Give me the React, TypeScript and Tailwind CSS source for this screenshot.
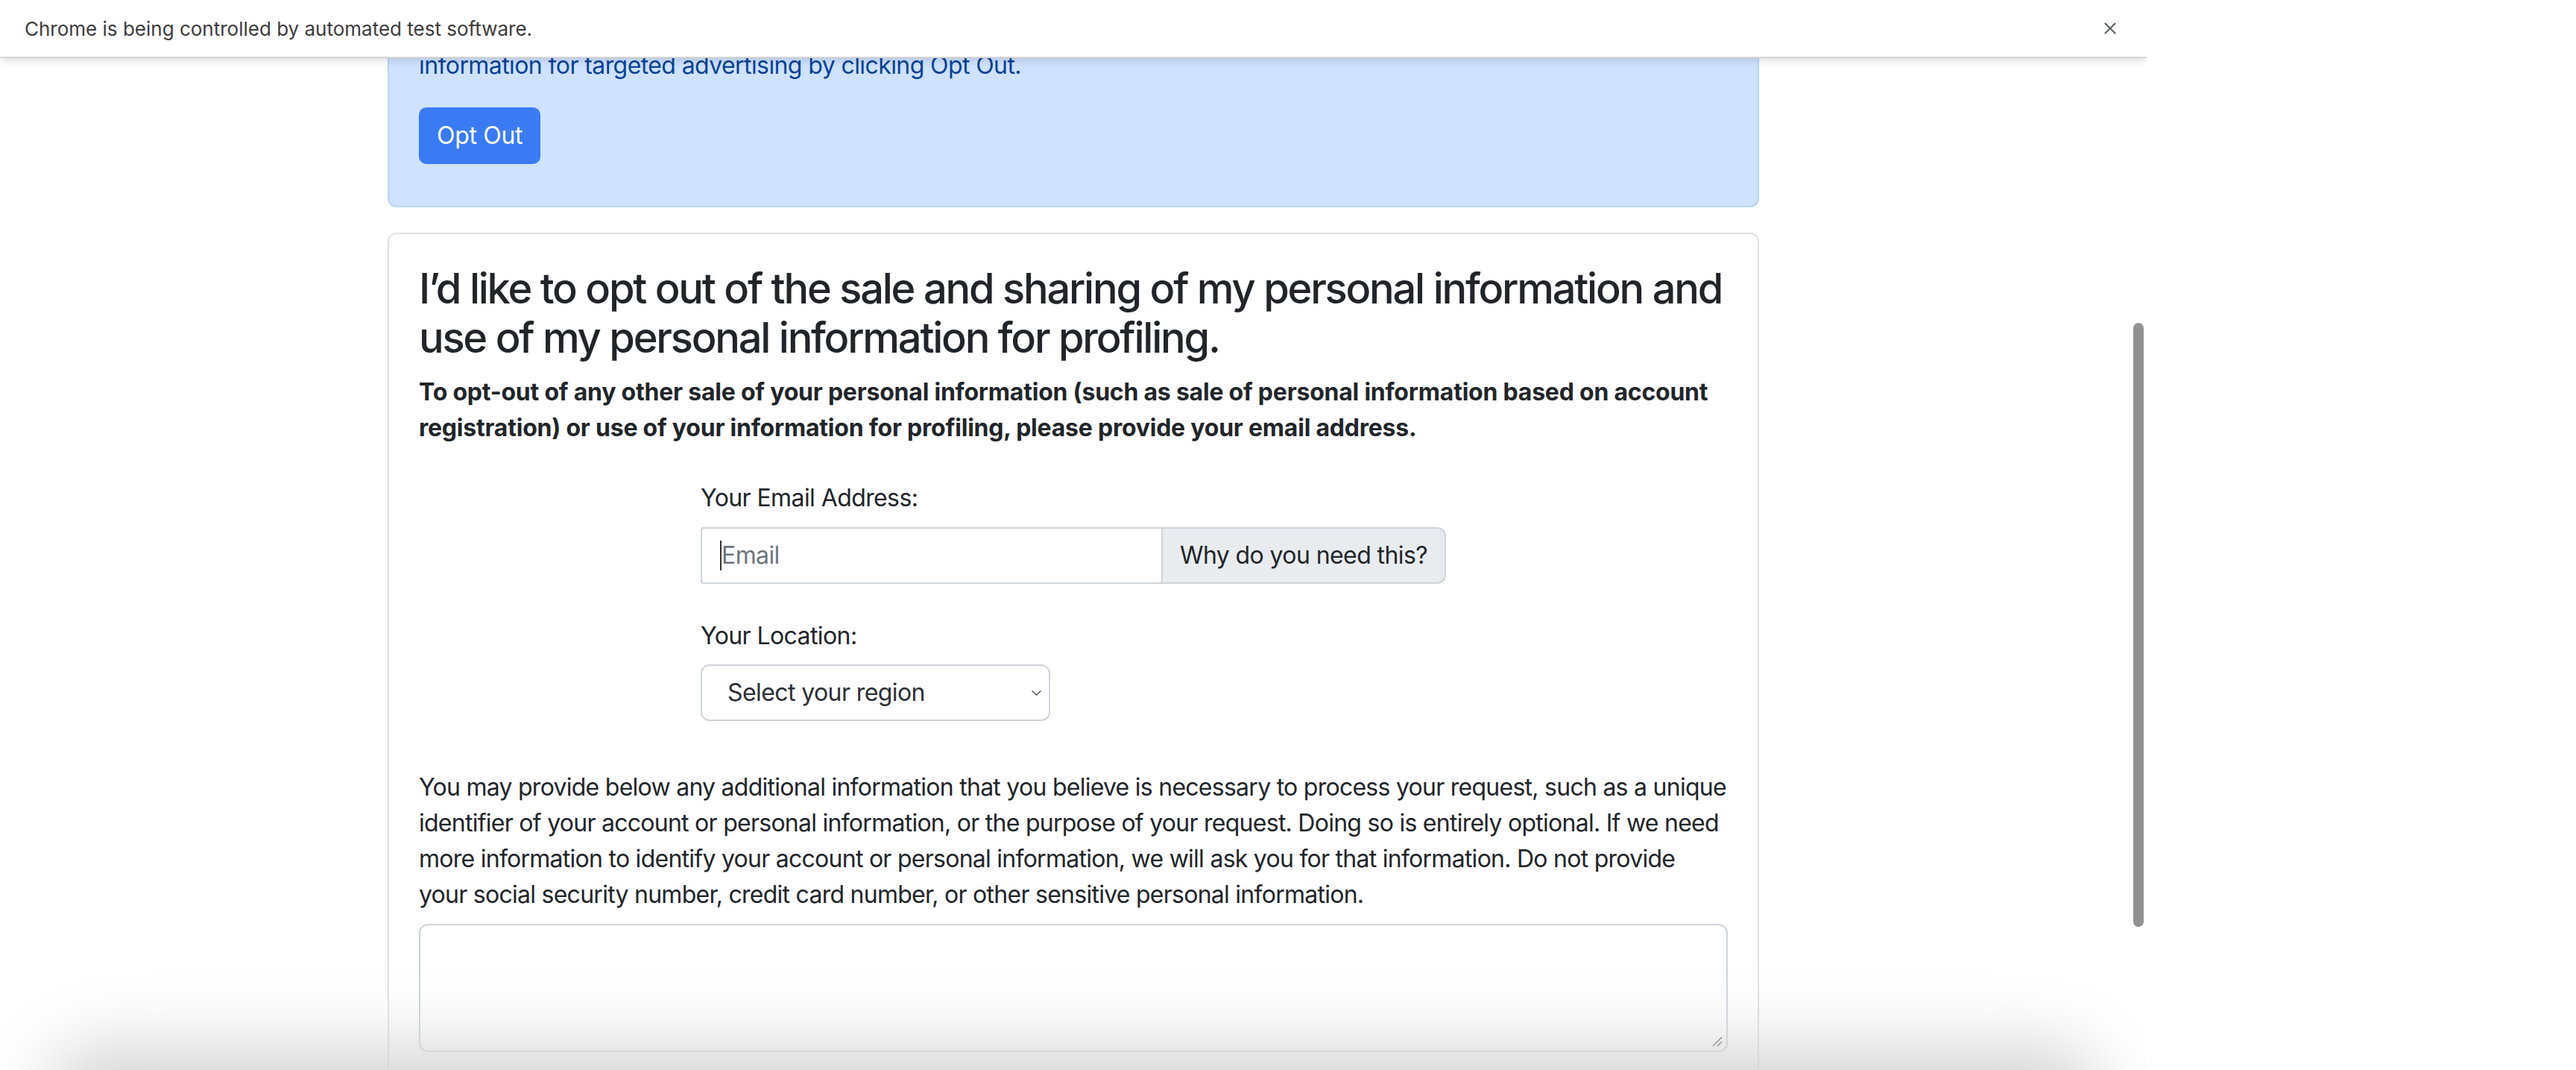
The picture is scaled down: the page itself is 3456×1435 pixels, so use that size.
import { X } from "lucide-react";

const font = { fontFamily: "Inter, 'Noto Sans', sans-serif" };

const ChromeBar = () => (
  <div className="absolute left-0 top-0 z-20 flex h-[78px] w-[2880px] items-center justify-between border-b-2 border-[#d6d6d6] bg-white pl-[33px] pr-[36px] shadow-[0_4px_10px_rgba(0,0,0,0.12)]">
    <span className="text-[26px] text-[#3c3c3c]">Chrome is being controlled by automated test software.</span>
    <X className="h-[26px] w-[26px] text-[#5f6368]" strokeWidth={2} />
  </div>
);

export default function App() {
  return (
    <div className="relative h-[1435px] w-[3456px] overflow-hidden bg-white text-[#212529]" style={font}>
      <div className="relative h-full w-[2880px] overflow-hidden">
        <ChromeBar />

        <main className="mx-auto w-[1840px] tracking-[-0.037em]">
          {/* alert, scrolled partly under the info bar */}
          <div className="rounded-b-[12px] border-2 border-t-0 border-[#b6d4fe] bg-[#cfe2ff] px-[40px] pb-[56px] pt-[64px] text-[32px] leading-[48px] text-[#084298]">
            <p>information for targeted advertising by clicking Opt Out.</p>
            <button className="mt-[32px] h-[76px] rounded-[10px] bg-[#3a7bf4] px-[24px] text-[32px] tracking-[-0.01em] text-white">
              Opt Out
            </button>
          </div>

          <section className="mt-[34px] rounded-t-[12px] border-2 border-b-0 border-[#dfe1e4] px-[40px] pt-[40px]">
            <h3 className="mb-[16px] text-[56px] font-medium leading-[66px] tracking-[-0.04em]">
              I’d like to opt out of the sale and sharing of my personal information and use of my personal information for profiling.
            </h3>
            <p className="text-[32px] font-bold leading-[48px] tracking-[-0.007em]">
              To opt-out of any other sale of your personal information (such as sale of personal information based on account registration) or use of your information for profiling, please provide your email address.
            </p>

            <div className="mt-[46px] pl-[378px] text-[32px] leading-[48px]">
              <label className="block">Your Email Address:</label>
              <div className="mt-[15px] flex h-[76px] w-[1000px]">
                <div className="flex w-[620px] items-center rounded-l-[4px] border-2 border-[#ced4da] bg-white pl-[24px]">
                  <span className="h-[40px] w-[2px] bg-[#333]" />
                  <span className="text-[#6c757d]">Email</span>
                </div>
                <div className="flex flex-1 items-center justify-center rounded-r-[12px] border-2 border-l-0 border-[#ced4da] bg-[#e9ecef]">
                  Why do you need this?
                </div>
              </div>

              <label className="mt-[46px] block">Your Location:</label>
              <div className="mt-[14px] flex h-[76px] w-[469px] items-center justify-between rounded-[12px] border-2 border-[#ced4da] pl-[34px] pr-[9px]">
                <span className="text-[#2b3035]">Select your region</span>
                <svg width="15" height="10" viewBox="0 0 15 10" fill="none" stroke="#555" strokeWidth="1.4">
                  <path d="M1.5 2.5l6 5.5 6-5.5" />
                </svg>
              </div>
            </div>

            <p className="mt-[65px] whitespace-nowrap text-[32px] leading-[48px] tracking-[-0.023em]">
              You may provide below any additional information that you believe is necessary to process your request, such as a unique
              <br />
              identifier of your account or personal information, or the purpose of your request. Doing so is entirely optional. If we need
              <br />
              more information to identify your account or personal information, we will ask you for that information. Do not provide
              <br />
              your social security number, credit card number, or other sensitive personal information.
            </p>
            <div className="relative mt-[15px] h-[172px] rounded-[12px] border-2 border-[#ced4da] bg-white">
              <svg className="absolute bottom-[4px] right-[4px]" width="18" height="18" viewBox="0 0 18 18" stroke="#666" strokeWidth="1.6">
                <path d="M16 4L4 16M16 10l-6 6" />
              </svg>
            </div>
            <div className="h-[200px]" />
          </section>
        </main>

        {/* overlay scrollbar */}
        <div className="absolute left-[2862px] top-[433px] h-[810px] w-[14px] rounded-full bg-[#929292]" />

        {/* soft shade at the bottom of the window */}
        <div className="pointer-events-none absolute left-[60px] top-[1400px] h-[170px] w-[2760px] rounded-[80px] bg-[#d6d6d6] blur-[45px]" />
      </div>
    </div>
  );
}
